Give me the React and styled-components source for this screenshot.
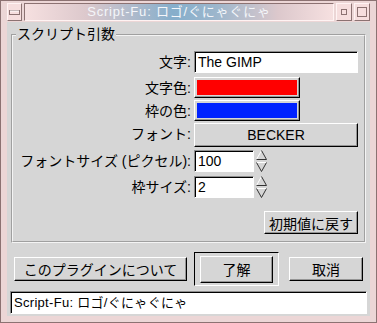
import React from 'react'
import styled, { createGlobalStyle } from 'styled-components'

const GlobalStyle = createGlobalStyle`
  html, body {
    margin: 0;
    padding: 0;
    background: #e8cece;
  }
  body {
    font-family: "Liberation Sans", "Noto Sans CJK JP", sans-serif;
    font-size: 13px;
    color: #000;
  }
`

const Frame = styled.div`
  width: 377px;
  height: 323px;
  box-sizing: border-box;
  background: #ecd6d6;
  border: 1px solid #8c7272;
  padding: 2px 6px 6px 6px;
  display: flex;
  flex-direction: column;
`

const TitleRow = styled.div`
  height: 18px;
  display: flex;
  gap: 2px;
  margin-bottom: 1px;
`

const FrameButton = styled.div`
  width: ${p => p.w || 15}px;
  box-sizing: border-box;
  background: #f6dede;
  border: 1px solid;
  border-color: #fff3f3 #8c7272 #8c7272 #fff3f3;
  display: flex;
  align-items: center;
  justify-content: center;
`

const Title = styled.div`
  flex: 1;
  box-sizing: border-box;
  border: 1px solid;
  border-color: #8c7272 #fff3f3 #fff3f3 #8c7272;
  background: linear-gradient(90deg, #f6e0e0 0%, #dcc8cc 20%, #86aecb 48%, #9cb6cc 62%, #dcc8cc 82%, #f6e0e0 100%);
  color: #f4f6fa;
  font-size: 13px;
  line-height: 16px;
  text-align: center;
  letter-spacing: 0.8px;
`

const Content = styled.div`
  flex: 1;
  background: #d6d6d6;
  padding: 4px 3px 2px 3px;
  display: flex;
  flex-direction: column;
`

const Group = styled.fieldset`
  margin: 0 1px;
  padding: 8px 6px 7px 0;
  border: 2px groove #f4f4f4;
  min-width: 0;
`

const Legend = styled.legend`
  padding: 0 1px;
  margin-left: 3px;
  font-size: 14px;
  line-height: 17px;
`

const Form = styled.div`
  display: grid;
  grid-template-columns: 178px 1fr;
  grid-template-rows: 26px 23px 23px 27px 26px 22px;
  column-gap: 3px;
  align-items: start;
`

const Label = styled.div`
  text-align: right;
  font-size: 14px;
  line-height: 22px;
  height: 22px;
  white-space: nowrap;
`

const Entry = styled.div`
  box-sizing: border-box;
  width: ${p => (p.w ? `${p.w}px` : '100%')};
  height: 22px;
  background: #fff;
  border: 1px solid;
  border-color: #8e8e8e #fff #fff #8e8e8e;
  box-shadow: inset 1px 1px 0 #000;
  padding: 0 3px;
  font-size: 14px;
  line-height: 21px;
  white-space: nowrap;
`

const Button = styled.div`
  box-sizing: border-box;
  width: ${p => (p.w ? `${p.w}px` : '100%')};
  height: ${p => p.h || 22}px;
  background: #d6d6d6;
  border: 1px solid;
  border-color: #fff #000 #000 #fff;
  box-shadow: inset -1px -1px 0 #959595;
  display: flex;
  align-items: center;
  justify-content: center;
  font-size: 14px;
  white-space: nowrap;
`

const Swatch = styled.div`
  width: calc(100% - 4px);
  height: calc(100% - 4px);
  margin: 0 1px 1px 0;
  background: ${p => p.color};
`

const SpinRow = styled.div`
  display: flex;
  align-items: center;
  gap: 2px;
`

const ResetRow = styled.div`
  margin-top: 13px;
  display: flex;
  justify-content: flex-end;
`

const ButtonRow = styled.div`
  margin-top: 9px;
  height: 34px;
  padding: 0 4px;
  display: flex;
  align-items: center;
`

const DefaultFrame = styled.div`
  box-sizing: border-box;
  width: 85px;
  height: 34px;
  margin-left: 7px;
  margin-right: 10px;
  border: 1px solid;
  border-color: #000 #fff #fff #000;
  padding: 0 5px;
  display: flex;
  align-items: center;
`

const Status = styled(Entry)`
  margin-top: 5px;
  height: 23px;
  line-height: 21px;
  font-size: 13px;
  letter-spacing: 0.3px;
`

const Spinner = () => (
  <svg width="11" height="22" viewBox="0 0 11 22">
    <polyline points="0.5,9.5 5.5,0.5" fill="none" stroke="#fff" strokeWidth="1" />
    <polyline points="5.5,0.5 10.5,9.5 0.5,9.5" fill="none" stroke="#333" strokeWidth="1" />
    <polyline points="0.5,12.5 10.5,12.5" fill="none" stroke="#fff" strokeWidth="1" />
    <polyline points="0.5,12.5 5.5,21.5 10.5,12.5" fill="none" stroke="#333" strokeWidth="1" />
  </svg>
)

export default function App() {
  return (
    <>
      <GlobalStyle />
      <Frame>
        <TitleRow>
          <FrameButton w={15}>
            <svg width="11" height="5" viewBox="0 0 11 5">
              <rect x="0.5" y="0.5" width="10" height="4" fill="none" stroke="#8c7272" />
              <line x1="1" y1="1" x2="10" y2="1" stroke="#fff" />
            </svg>
          </FrameButton>
          <Title>Script-Fu: ロゴ/ぐにゃぐにゃ</Title>
          <FrameButton w={16}>
            <svg width="6" height="6" viewBox="0 0 6 6">
              <rect x="0.5" y="0.5" width="5" height="5" fill="none" stroke="#8c7272" />
            </svg>
          </FrameButton>
          <FrameButton w={16}>
            <svg width="10" height="10" viewBox="0 0 10 10">
              <rect x="0.5" y="0.5" width="9" height="9" fill="none" stroke="#8c7272" />
            </svg>
          </FrameButton>
        </TitleRow>
        <Content>
          <Group>
            <Legend>スクリプト引数</Legend>
            <Form>
              <Label>文字:</Label>
              <Entry>The GIMP</Entry>
              <Label>文字色:</Label>
              <Button w={106} h={21}><Swatch color="#ff0000" /></Button>
              <Label>枠の色:</Label>
              <Button w={106} h={21}><Swatch color="#0022ff" /></Button>
              <Label>フォント:</Label>
              <Button h={24}>BECKER</Button>
              <Label>フォントサイズ (ピクセル):</Label>
              <SpinRow>
                <Entry w={60}>100</Entry>
                <Spinner />
              </SpinRow>
              <Label>枠サイズ:</Label>
              <SpinRow>
                <Entry w={60}>2</Entry>
                <Spinner />
              </SpinRow>
            </Form>
            <ResetRow>
              <Button w={94} h={23}>初期値に戻す</Button>
            </ResetRow>
          </Group>
          <ButtonRow>
            <Button w={173} h={24}>このプラグインについて</Button>
            <DefaultFrame>
              <Button h={27}>了解</Button>
            </DefaultFrame>
            <Button w={74} h={24}>取消</Button>
          </ButtonRow>
          <Status>Script-Fu: ロゴ/ぐにゃぐにゃ</Status>
        </Content>
      </Frame>
    </>
  )
}
